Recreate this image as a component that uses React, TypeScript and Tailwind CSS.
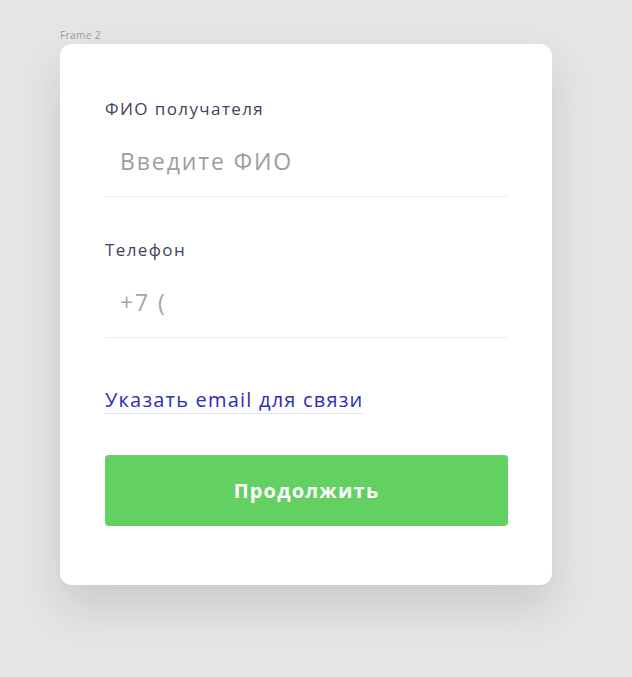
import { useState } from "react";

export default function App() {
  const [name, setName] = useState("");
  const [phone, setPhone] = useState("");

  return (
    <div className="min-h-screen bg-[#e5e5e5] px-[60px] pt-[29px] font-['Open_Sans',sans-serif]">
      <div className="mb-[3px] text-[10px] leading-[12px] tracking-[0.4px] text-[#9b9b9b]">Frame 2</div>

      {/* Карточка формы */}
      <div className="w-[492px] rounded-[12px] bg-white pb-[59px] pl-[45px] pr-[44px] pt-[52px] shadow-[0_22px_44px_rgba(0,0,0,0.12)]">
        <div className="text-[17px] leading-[26px] tracking-[1.4px] text-[#42425a]">ФИО получателя</div>
        <div className="flex h-[75px] items-center border-b border-[#ededed] pl-[15px] pt-[5px]">
          <input
            className="w-full bg-transparent text-[23px] tracking-[1.9px] text-[#333] outline-none placeholder:text-[#9d9d9d]"
            placeholder="Введите ФИО"
            value={name}
            onChange={e => setName(e.target.value)}
          />
        </div>

        <div className="mt-[40px] text-[17px] leading-[26px] tracking-[1.4px] text-[#42425a]">Телефон</div>
        <div className="flex h-[75px] items-center border-b border-[#ededed] pl-[15px] pt-[5px]">
          <input
            className="w-full bg-transparent text-[23px] tracking-[1.9px] text-[#333] outline-none placeholder:text-[#a5a5a5]"
            placeholder="+7 ("
            value={phone}
            onChange={e => setPhone(e.target.value)}
          />
        </div>

        <div className="mt-[49px]">
          <a href="#" className="inline-block border-b border-[#e3e3f1] text-[20px] leading-[26px] tracking-[1.2px] text-[#2e2eb8]">
            Указать email для связи
          </a>
        </div>

        <button className="mt-[41px] h-[71px] w-full rounded-[4px] bg-[#63d162] text-[20px] font-bold tracking-[1.2px] text-white">
          Продолжить
        </button>
      </div>
    </div>
  );
}
